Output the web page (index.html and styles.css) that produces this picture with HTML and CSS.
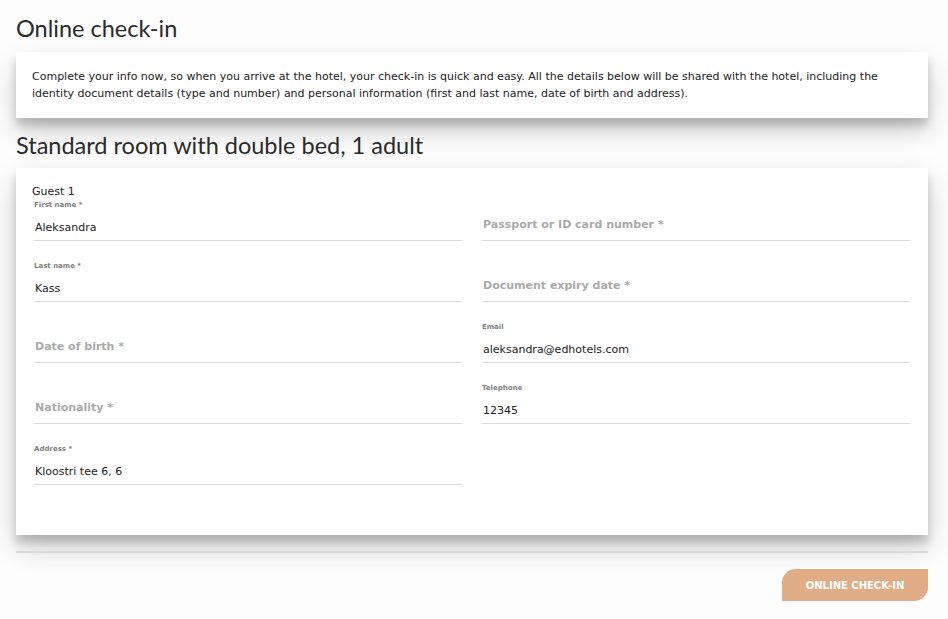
FILE: index.html
```html
<!DOCTYPE html>
<html lang="en">
<head>
    <meta charset="UTF-8">
    <meta name="viewport" content="width=device-width, initial-scale=1.0">
    <title>Online check-in</title>
    <link rel="stylesheet" href="styles.css">
</head>
<body>
    <main class="checkin">
        <h1 class="page-title">Online check-in</h1>

        <div class="card intro">
            <p>Complete your info now, so when you arrive at the hotel, your check-in is quick and easy. All the details below will be shared with the hotel, including the identity document details (type and number) and personal information (first and last name, date of birth and address).</p>
        </div>

        <h2 class="room-title">Standard room with double bed, 1 adult</h2>

        <form class="card guest">
            <div class="guest-title">Guest 1</div>
            <div class="fields">
                <div class="field">
                    <label class="field-label">First name *</label>
                    <input class="field-input" type="text" value="Aleksandra">
                </div>
                <div class="field empty">
                    <label class="field-label">Passport or ID card number *</label>
                    <input class="field-input" type="text" placeholder="Passport or ID card number *">
                </div>
                <div class="field">
                    <label class="field-label">Last name *</label>
                    <input class="field-input" type="text" value="Kass">
                </div>
                <div class="field empty">
                    <label class="field-label">Document expiry date *</label>
                    <input class="field-input" type="text" placeholder="Document expiry date *">
                </div>
                <div class="field empty">
                    <label class="field-label">Date of birth *</label>
                    <input class="field-input" type="text" placeholder="Date of birth *">
                </div>
                <div class="field">
                    <label class="field-label">Email</label>
                    <input class="field-input" type="text" value="aleksandra@edhotels.com">
                </div>
                <div class="field empty">
                    <label class="field-label">Nationality *</label>
                    <input class="field-input" type="text" placeholder="Nationality *">
                </div>
                <div class="field">
                    <label class="field-label">Telephone</label>
                    <input class="field-input" type="text" value="12345">
                </div>
                <div class="field">
                    <label class="field-label">Address *</label>
                    <input class="field-input" type="text" value="Kloostri tee 6, 6">
                </div>
            </div>
        </form>

        <hr class="divider">

        <div class="actions">
            <button class="btn-checkin" type="button">Online check-in</button>
        </div>
    </main>
</body>
</html>
```

FILE: styles.css
```css
body {
    font-family: 'DejaVu Sans', sans-serif;
    background-color: #fdfdfd;
    margin: 0;
    padding: 0;
    color: #222;
}

.checkin {
    padding: 14px 20px 18px 16px;
}

.page-title,
.room-title {
    font-family: 'Lato', sans-serif;
    font-weight: 400;
    font-size: 23.5px;
    line-height: 28px;
    color: #2a2a2a;
    margin: 0;
}

.page-title {
    margin-bottom: 10px;
}

.room-title {
    margin: 13px 0 9px;
}

/* cards */
.card {
    background-color: #ffffff;
    box-shadow: 0 12px 26px rgba(0, 0, 0, 0.2), 0 8px 8px rgba(0, 0, 0, 0.16);
}

.intro {
    padding: 16px;
}

.intro p {
    margin: 0;
    font-size: 11px;
    line-height: 17px;
}

.guest {
    padding: 16px 18px 50px;
}

.guest-title {
    font-size: 11px;
    line-height: 15px;
    margin-left: -2px;
}

.fields {
    display: grid;
    grid-template-columns: 1fr 1fr;
    column-gap: 20px;
    row-gap: 19px;
}

.field {
    display: flex;
    flex-direction: column;
}

.field-label {
    font-size: 7px;
    line-height: 12px;
    font-weight: 700;
    color: #808080;
}

.field.empty .field-label {
    visibility: hidden;
}

.field-input {
    font-family: inherit;
    font-size: 11px;
    color: #222;
    height: 30px;
    padding: 3px 0 0 1px;
    border: 0;
    border-bottom: 1px solid #ddd;
    background: transparent;
    outline: none;
    box-sizing: border-box;
}

.field-input::placeholder {
    color: #aaa;
    font-weight: 700;
}

.field.empty .field-input {
    padding: 0 0 3px 1px;
}

.divider {
    border: 0;
    height: 2px;
    background-color: #d8d8d8;
    margin: 16px 0 16px;
}

.actions {
    display: flex;
    justify-content: flex-end;
}

.btn-checkin {
    font-family: 'DejaVu Sans', sans-serif;
    font-size: 10px;
    font-weight: 700;
    text-transform: uppercase;
    color: #ffffff;
    background-color: #e0ad87;
    border: 0;
    border-radius: 14px 0 14px 0;
    width: 146px;
    height: 32px;
    cursor: pointer;
}
```
